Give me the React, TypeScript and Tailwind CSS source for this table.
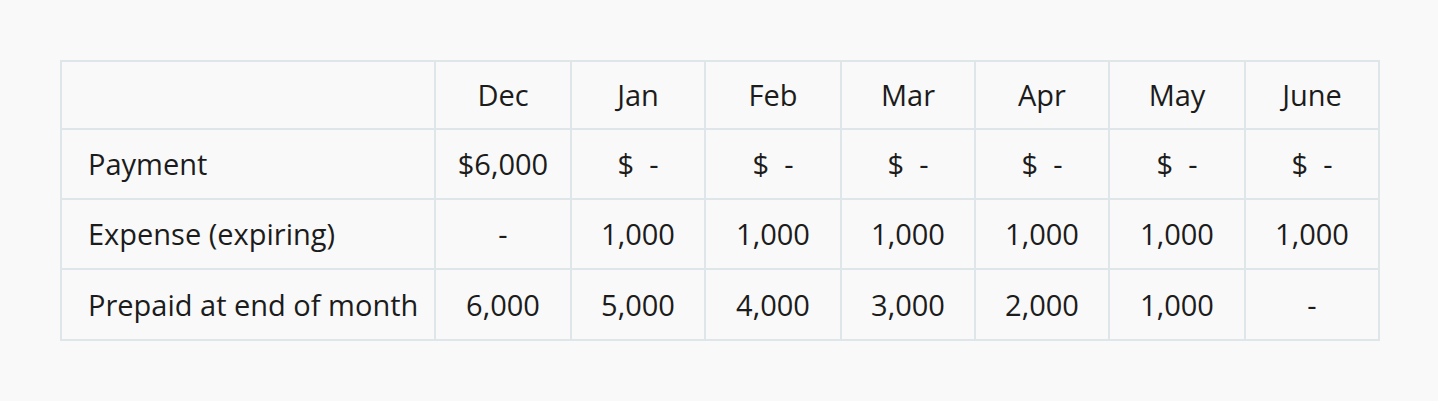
const months = ["Dec", "Jan", "Feb", "Mar", "Apr", "May", "June"];

const rows: { label: string; values: string[]; height: string }[] = [
  {
    label: "Payment",
    values: ["$6,000", "$  -", "$  -", "$  -", "$  -", "$  -", "$  -"],
    height: "h-[70px]",
  },
  {
    label: "Expense (expiring)",
    values: ["-", "1,000", "1,000", "1,000", "1,000", "1,000", "1,000"],
    height: "h-[70px]",
  },
  {
    label: "Prepaid at end of month",
    values: ["6,000", "5,000", "4,000", "3,000", "2,000", "1,000", "-"],
    height: "h-[71px]",
  },
];

const colWidths = [
  "w-[136px]",
  "w-[134px]",
  "w-[136px]",
  "w-[134px]",
  "w-[134px]",
  "w-[136px]",
  "w-[134px]",
];

export default function App() {
  return (
    <div className="min-h-screen bg-[#f9f9f9] px-[60px] py-[60px] font-['Open_Sans',sans-serif] text-[29px] text-[#1c1c1c]">
      <table className="w-[1320px] table-fixed border-collapse">
        <thead>
          <tr className="h-[68px]">
            <th className="w-[374px] border-2 border-[#dfe6ea]" />
            {months.map((m, i) => (
              <th
                key={m}
                className={`${colWidths[i]} border-2 border-[#dfe6ea] text-center font-normal`}
              >
                {m}
              </th>
            ))}
          </tr>
        </thead>
        <tbody>
          {rows.map((row) => (
            <tr key={row.label} className={row.height}>
              <td className="whitespace-nowrap border-2 border-[#dfe6ea] pl-[26px] text-left">
                {row.label}
              </td>
              {row.values.map((v, i) => (
                <td
                  key={i}
                  className="whitespace-pre border-2 border-[#dfe6ea] text-center"
                >
                  {v}
                </td>
              ))}
            </tr>
          ))}
        </tbody>
      </table>
    </div>
  );
}
